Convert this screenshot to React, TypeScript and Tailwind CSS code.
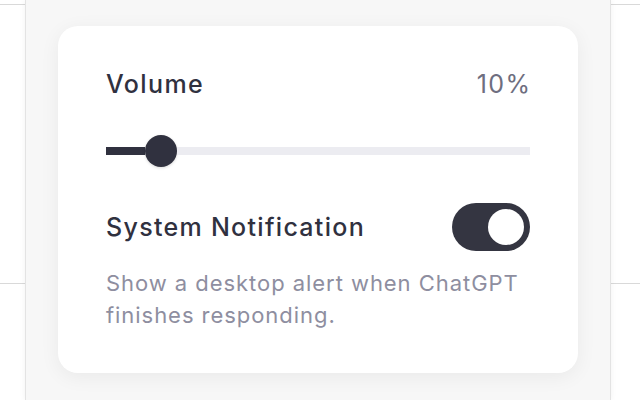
export default function App() {
  return (
    <div
      className="flex h-[400px] w-[640px] overflow-hidden bg-white"
      style={{ fontFamily: "Inter, 'Noto Sans', sans-serif" }}
    >
      {/* page rows peeking out on the left */}
      <div className="w-[25px] shrink-0 pt-[4px]">
        <div className="h-[280px] border-y border-[#d9d9d9]" />
      </div>

      {/* settings sheet */}
      <div className="relative z-10 w-[586px] shrink-0 border-x border-[#e3e3e3] bg-[#f7f7f7] px-[32px] pt-[26px] shadow-[0_0_6px_rgba(0,0,0,0.06)]">
        <div className="flex w-[520px] flex-col rounded-[20px] bg-white px-[48px] pb-[42px] pt-[42px] shadow-[0_4px_20px_rgba(0,0,0,0.06)]">
          {/* volume row */}
          <div className="flex h-[32px] items-center justify-between text-[25px] leading-[32px] tracking-[1.4px]">
            <span className="font-medium text-[#30313f]">Volume</span>
            <span className="-mr-[1.4px] text-[#6e6e80]">10%</span>
          </div>

          {/* slider */}
          <div className="mt-[35px] flex h-[32px] items-center">
            <div className="h-[8px] w-[39px] bg-[#30313f]" />
            <div className="h-[32px] w-[32px] shrink-0 rounded-full bg-[#30313f] shadow-[0_1px_3px_rgba(0,0,0,0.15)]" />
            <div className="h-[8px] flex-1 bg-[#ececf1]" />
          </div>

          {/* notification row */}
          <div className="mt-[36px] flex h-[48px] items-center justify-between">
            <span className="text-[25px] font-medium leading-[32px] tracking-[1.3px] text-[#30313f]">
              System Notification
            </span>
            <div className="flex h-[48px] w-[78px] items-center justify-end rounded-full bg-[#343541] pr-[6px]">
              <div className="h-[36px] w-[36px] rounded-full bg-white" />
            </div>
          </div>

          <p className="mt-[16px] whitespace-nowrap text-[22px] leading-[32px] tracking-[0.95px] text-[#8e8ea0]">
            Show a desktop alert when ChatGPT
            <br />
            finishes responding.
          </p>
        </div>
      </div>

      {/* page rows peeking out on the right */}
      <div className="flex-1 pt-[4px]">
        <div className="h-[280px] border-y border-[#d9d9d9]" />
      </div>
    </div>
  );
}
